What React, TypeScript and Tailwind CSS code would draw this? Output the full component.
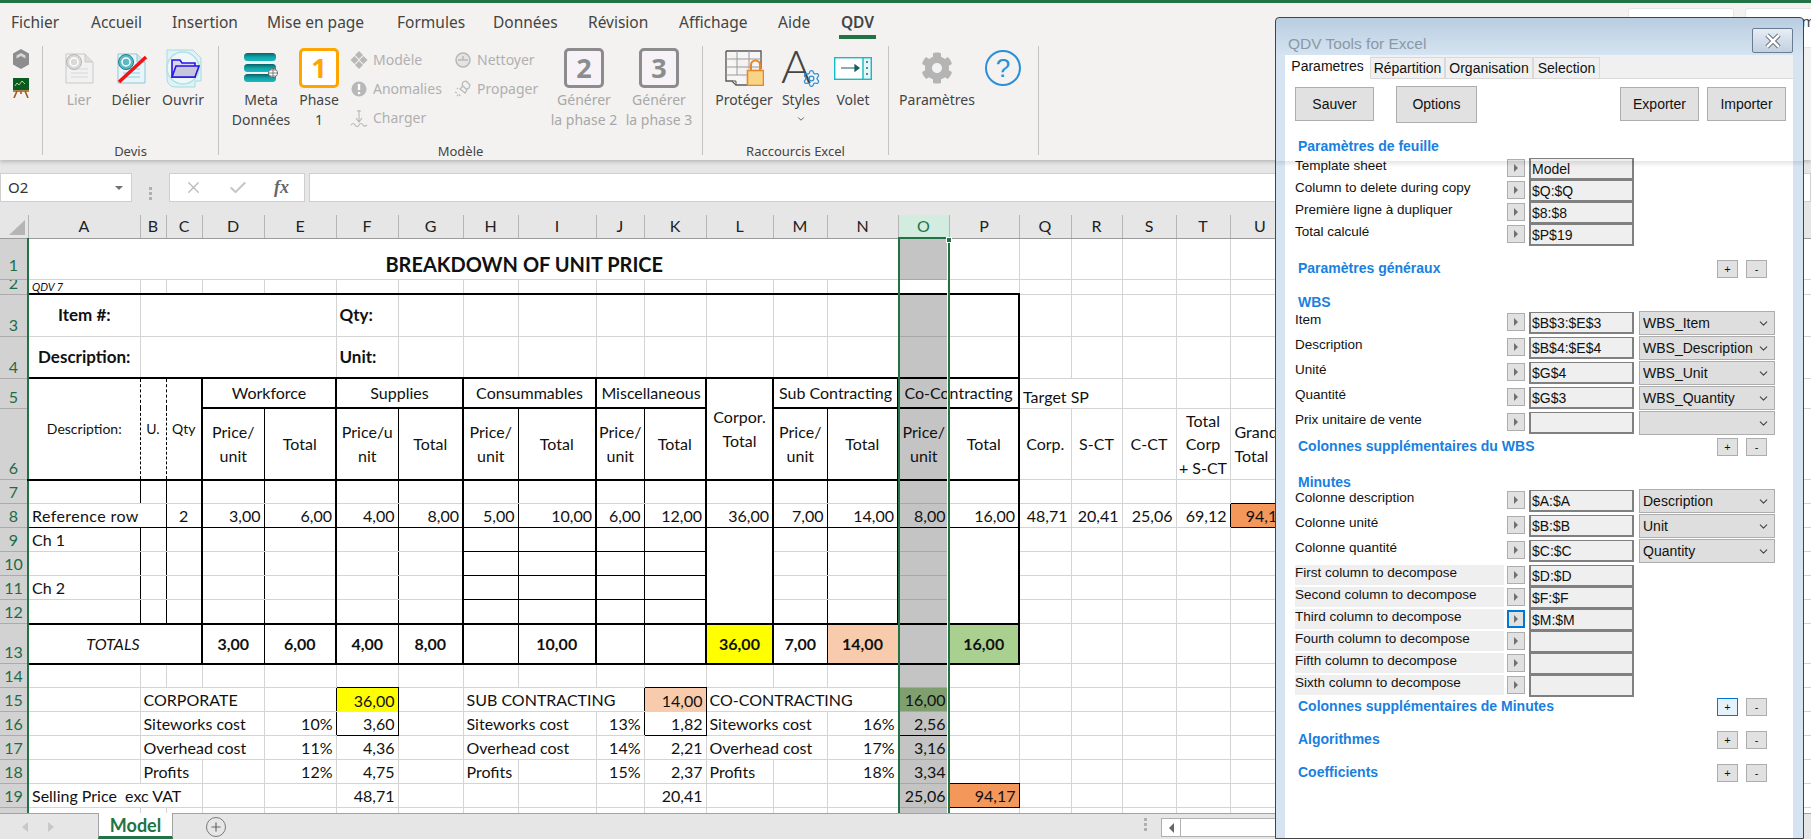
import type { ReactNode } from 'react';
import { Check, ChevronDown, Plus, Settings, X } from 'lucide-react';
import { FaCog } from 'react-icons/fa';

const R_GRAY = 'border-r border-r-[#d4d4d4]';
const R_THIN = 'border-r border-r-black';
const R_THICK = 'border-r-2 border-r-black';
const R_DASH = 'border-r border-r-black [border-right-style:dashed]';
const B_GRAY = 'border-b border-b-[#d4d4d4]';
const B_DARK = 'border-b border-b-[#a8a8a8]';
const B_THIN = 'border-b border-b-black';
const B_THICK = 'border-b-2 border-b-black';
const GREY = 'bg-[#c4c4c4]';

const COL_WIDTHS = [
  'w-[28px]', 'w-[112px]', 'w-[26px]', 'w-[36px]', 'w-[62px]', 'w-[72px]', 'w-[62px]', 'w-[65px]', 'w-[55px]', 'w-[78px]', 'w-[48px]', 'w-[62px]',
  'w-[67px]', 'w-[54px]', 'w-[71px]', 'w-[51px]', 'w-[70px]', 'w-[52px]', 'w-[51px]', 'w-[54px]', 'w-[54px]', 'w-[60px]', 'w-[521px]',
];
const LETTERS = ['A', 'B', 'C', 'D', 'E', 'F', 'G', 'H', 'I', 'J', 'K', 'L', 'M', 'N', 'O', 'P', 'Q', 'R', 'S', 'T', 'U'];

// right border of A..P for the body of the table
const VERTS = [R_THIN, R_THIN, R_THICK, R_THIN, R_THICK, R_THIN, R_THICK, R_THIN, R_THICK, R_THIN, R_THICK, R_THICK, R_THIN, R_THICK, R_GRAY, R_THICK];

const NUM = 'text-right pr-[3px]';
const TXT = 'text-left pl-[3px]';
const MID = 'text-center !align-middle';

function Td({ children, cl = '', span, rows }: { children?: ReactNode; cl?: string; span?: number; rows?: number }) {
  return (
    <td colSpan={span} rowSpan={rows} className={`p-0 overflow-hidden whitespace-pre align-bottom leading-[22px] ${cl}`}>
      {children}
    </td>
  );
}

// empty cells with the normal grid lines
function Blanks({ n, b = B_GRAY }: { n: number; b?: string }) {
  return (
    <>
      {Array.from({ length: n }).map((_, i) => (
        <Td key={i} cl={`${R_GRAY} ${b}`} />
      ))}
    </>
  );
}

function RowHead({ n, short, lift }: { n?: number; short?: boolean; lift?: boolean }) {
  return (
    <td className={`p-0 overflow-hidden bg-[#d2d2d2] text-[#1e6b45] font-normal text-center align-bottom leading-[22px] border-r-2 border-r-[#217346] border-b border-b-[#ababab] ${lift ? 'pb-[3px]' : ''}`}>
      {short ? <div className="h-[14px] overflow-hidden flex items-end justify-center">{n}</div> : n}
    </td>
  );
}

function DocIcon({ muted, cut }: { muted?: boolean; cut?: boolean }) {
  return (
    <svg width="33" height="33" viewBox="0 0 33 33">
      <path d="M3 2h19l8 8v21H3z" fill={muted ? '#f1f1f1' : '#e8f6fb'} stroke={muted ? '#c9c9c9' : '#8fc7d6'} />
      <path d="M22 2v8h8" fill={muted ? '#dddddd' : '#c6e7ef'} stroke={muted ? '#c9c9c9' : '#8fc7d6'} />
      <path d="M8 17h17M8 21h17M8 25h17" stroke={muted ? '#d8d8d8' : '#86cfe2'} />
      <circle cx="11" cy="10" r="7.5" fill={muted ? '#d9d9d9' : '#5fb7c4'} stroke={muted ? '#b5b5b5' : '#1b7f8c'} />
      <circle cx="11" cy="10" r="4" fill="none" stroke="#fff" strokeWidth="1.5" />
      {cut && <path d="M4 30L31 5" stroke="#f01414" strokeWidth="3.5" />}
    </svg>
  );
}

function OpenIcon() {
  return (
    <svg width="38" height="39" viewBox="0 0 38 39">
      <path d="M3 1h26l8 8v23h-6v6H11a8 8 0 0 1-8-8z" fill="#def3f5" stroke="#a7dbe0" />
      <circle cx="19" cy="19" r="16" fill="#eef8f9" stroke="#b5dfe3" strokeWidth="1.5" />
      <path d="M8 11h8l2 3h13v14H8z" fill="#d8d8f4" stroke="#2a12e6" strokeWidth="1.6" />
      <path d="M8 28l4-11h23l-4 11z" fill="#c7c7dc" stroke="#2a12e6" strokeWidth="1.6" />
    </svg>
  );
}

function MetaIcon() {
  return (
    <svg width="34" height="30" viewBox="0 0 34 30">
      <defs>
        <linearGradient id="bar" x1="0" y1="0" x2="0" y2="1">
          <stop offset="0" stopColor="#0b5f66" />
          <stop offset="0.5" stopColor="#10a3a8" />
          <stop offset="1" stopColor="#14bcbe" />
        </linearGradient>
      </defs>
      <rect x="0" y="0" width="32" height="8" rx="3.5" fill="url(#bar)" />
      <rect x="0" y="11" width="32" height="8" rx="3.5" fill="url(#bar)" />
      <rect x="0" y="21" width="32" height="8" rx="3.5" fill="url(#bar)" />
      <circle cx="29" cy="20" r="4.5" fill="#fff" stroke="#555" strokeWidth="0.8" />
      <path d="M24.500 20h9M29 15.500v9M26 17h6M26 23h6" stroke="#555" strokeWidth="0.7" />
    </svg>
  );
}

function ProtectIcon() {
  return (
    <svg width="39" height="36" viewBox="0 0 39 36">
      <path d="M1 1h35v18M1 1v30h6l4 4h12" fill="#f6f6f6" stroke="#5a5a5a" strokeWidth="1.4" />
      <path d="M1 9h35M1 17h35M1 25h22M12 1v24M24 1v18" stroke="#9a9a9a" />
      <path d="M7 31l4 4v-4z" fill="#ddd" stroke="#5a5a5a" />
      <path d="M26 21v-6a4.500 4.500 0 0 1 9 0v6" fill="none" stroke="#e8872a" strokeWidth="2" />
      <rect x="22.500" y="20.500" width="16" height="15" fill="#f7d486" stroke="#e8872a" strokeWidth="1.6" />
    </svg>
  );
}

function VoletIcon() {
  return (
    <svg width="38" height="23" viewBox="0 0 38 23">
      <rect x="0.700" y="0.700" width="36.600" height="21.600" fill="#fff" stroke="#12bcc6" strokeWidth="1.4" />
      <rect x="29" y="0.700" width="8.300" height="21.600" fill="#e3f7f8" stroke="#12bcc6" strokeWidth="1.4" />
      <path d="M7 11h17M21 8l4 3-4 3z" stroke="#1d5b63" strokeWidth="1.2" fill="#1d5b63" />
      <path d="M33 4v2M33 10v2M33 16v2" stroke="#1d5b63" strokeWidth="1.4" />
    </svg>
  );
}

function MiniIcon({ kind }: { kind: string }) {
  const c = '#b8b8b8';
  return (
    <svg width="18" height="18" viewBox="0 0 18 18" className="shrink-0">
      {kind === 'model' && <path d="M9 0l4 4-4 4-4-4zM4.500 5l4 4-4 4-4-4zM13.500 5l4 4-4 4-4-4zM9 10l4 4-4 4-4-4z" fill={c} />}
      {kind === 'warn' && (
        <>
          <circle cx="9" cy="9" r="7.500" fill={c} />
          <path d="M9 4v6" stroke="#fff" strokeWidth="2.400" />
          <circle cx="9" cy="13" r="1.300" fill="#fff" />
        </>
      )}
      {kind === 'load' && <path d="M9 1v11M6 9l3 4 3-4M7 2h4M1 16c2-2 3-2 4 0s3 2 4 0 3-2 4 0 3 1 4 0" fill="none" stroke={c} strokeWidth="1.100" />}
      {kind === 'clean' && (
        <>
          <circle cx="9" cy="9" r="7" fill="#e4e4e4" stroke={c} strokeWidth="1.500" />
          <path d="M4 9h10M9 5v4" stroke={c} strokeWidth="1.500" />
        </>
      )}
      {kind === 'spread' && <path d="M9 2l3-1 4 4-1 3-3 1-4-4zM9 6l4 4-2 3-5-4zM3 8l1 1M1 12l2 1M5 14l1 2M3 16l1-1" fill="none" stroke={c} strokeWidth="1.200" />}
    </svg>
  );
}

function RibbonBtn({ icon, lines, w, muted }: { icon: ReactNode; lines: ReactNode[]; w: string; muted?: boolean }) {
  return (
    <div className={`${w} flex flex-col items-center ${muted ? 'text-[#a8a8a8]' : 'text-[#444]'}`}>
      <div className="h-[44px] flex items-center justify-center">{icon}</div>
      {lines.map((l, i) => (
        <div key={i} className="leading-[20px] whitespace-nowrap">
          {l}
        </div>
      ))}
    </div>
  );
}

function PhaseBox({ n, active }: { n: number; active?: boolean }) {
  return (
    <div
      className={`w-[40px] h-[40px] rounded-[5px] border-[3px] flex items-center justify-center text-[27px] font-bold ${
        active ? 'border-[#ffa500] text-[#ffa500] bg-white' : 'border-[#8c8c8c] text-[#8c8c8c] bg-[#f6f2f8]'
      }`}
    >
      {n}
    </div>
  );
}

function MiniBtn({ kind, label }: { kind: string; label: string }) {
  return (
    <div className="h-[29px] flex items-center gap-[5px] text-[#b0b0b0] whitespace-nowrap">
      <MiniIcon kind={kind} />
      {label}
    </div>
  );
}

function Group({ w, label, children, px = '' }: { w: string; label?: string; children: ReactNode; px?: string }) {
  return (
    <div className={`${w} h-[109px] mt-[4px] border-r border-r-[#c4c4c4] flex flex-col shrink-0`}>
      <div className={`flex-1 flex ${px}`}>{children}</div>
      <div className="h-[20px] -mb-[5px] leading-[22px] text-center text-[13px] text-[#444]">{label}</div>
    </div>
  );
}

function Ribbon() {
  const tabs = [
    ['Fichier', 'w-[80px]'],
    ['Accueil', 'w-[81px]'],
    ['Insertion', 'w-[95px]'],
    ['Mise en page', 'w-[130px]'],
    ['Formules', 'w-[96px]'],
    ['Données', 'w-[95px]'],
    ['Révision', 'w-[91px]'],
    ['Affichage', 'w-[99px]'],
    ['Aide', 'w-[61px]'],
  ];
  return (
    <div className="relative z-10 h-[160px] shrink-0 bg-[#f3f2f1] border-t-[3px] border-t-[#217346] shadow-[0_2px_4px_rgba(0,0,0,0.2)] text-[14px] font-['Noto_Sans',sans-serif] overflow-hidden">
      <div className="h-[39px] pl-[11px] flex text-[15.5px] text-[#444]">
        {tabs.map(([t, w]) => (
          <div key={t} className={`${w} shrink-0 leading-[38px] whitespace-nowrap`}>
            {t}
          </div>
        ))}
        <div className="h-[36px] shrink-0 leading-[38px] font-semibold border-b-[4px] border-b-[#217346] w-[37px] text-center">QDV</div>
        <div className="ml-[752px] mt-[5px] w-[106px] h-[40px] shrink-0 rounded-[3px] bg-white border border-[#e5e5e5] flex gap-[6px] text-[15px] leading-[24px] pl-[18px] text-[#444]">
          <span className="text-[#217346]">↗</span>Partager
        </div>
        <div className="ml-[11px] mt-[5px] w-[120px] h-[40px] rounded-[3px] bg-white border border-[#e5e5e5] flex text-[15px] leading-[24px] pl-[37px] text-[#444] shrink-0">
          Commentaires
        </div>
      </div>
      <div className="flex">
        <Group w="w-[43px]">
          <div className="w-full flex flex-col items-center pt-[3px] gap-[9px]">
            <svg width="18" height="20" viewBox="0 0 18 20">
              <path d="M9 0l8 4.500v11L9 20l-8-4.500v-11z" fill="#8d8d8d" />
              <path d="M9 4l4.500 2.500v3L9 7 4.500 9.500v-3z" fill="#d8d8d8" />
            </svg>
            <svg width="18" height="20" viewBox="0 0 18 20">
              <rect x="1" y="0" width="16" height="12" fill="#0a5c1e" />
              <path d="M3 8l2-3 2 2 3-4 3 3" fill="none" stroke="#d6f0c8" strokeWidth="0.800" />
              <path d="M1 13h16M5 13l-3 7M13 13l3 7M9 13v3" stroke="#a05a16" strokeWidth="1.600" />
            </svg>
          </div>
        </Group>
        <Group w="w-[176px]" label="Devis" px="pl-[10px]">
          <RibbonBtn w="w-[52px]" muted icon={<DocIcon muted />} lines={['Lier']} />
          <RibbonBtn w="w-[52px]" icon={<DocIcon cut />} lines={['Délier']} />
          <RibbonBtn w="w-[52px]" icon={<OpenIcon />} lines={['Ouvrir']} />
        </Group>
        <Group w="w-[484px]" label="Modèle" px="pl-[12px]">
          <RibbonBtn w="w-[60px]" icon={<MetaIcon />} lines={['Meta', 'Données']} />
          <RibbonBtn w="w-[56px]" icon={<PhaseBox n={1} active />} lines={['Phase', '1']} />
          <div className="w-[106px] pl-[3px] -mt-px">
            <MiniBtn kind="model" label="Modèle" />
            <MiniBtn kind="warn" label="Anomalies" />
            <MiniBtn kind="load" label="Charger" />
          </div>
          <div className="w-[93px] pl-[1px] -mt-px">
            <MiniBtn kind="clean" label="Nettoyer" />
            <MiniBtn kind="spread" label="Propager" />
          </div>
          <RibbonBtn w="w-[76px]" muted icon={<PhaseBox n={2} />} lines={['Générer', 'la phase 2']} />
          <RibbonBtn w="w-[74px]" muted icon={<PhaseBox n={3} />} lines={['Générer', 'la phase 3']} />
        </Group>
        <Group w="w-[186px]" label="Raccourcis Excel" px="pl-[9px]">
          <RibbonBtn w="w-[64px]" icon={<ProtectIcon />} lines={['Protéger']} />
          <RibbonBtn
            w="w-[50px]"
            icon={
              <div className="relative w-[40px] h-[40px]">
                <span className="absolute left-0 -top-[10px] text-[46px] leading-[56px] font-light text-[#444] font-['Lato',sans-serif]">A</span>
                <Settings size={19} strokeWidth={1.6} className="absolute right-0 bottom-0 text-[#2b8fd8]" />
              </div>
            }
            lines={['Styles', <ChevronDown key="c" size={10} className="mt-[4px]" />]}
          />
          <RibbonBtn w="w-[54px]" icon={<VoletIcon />} lines={['Volet']} />
        </Group>
        <Group w="w-[150px]" px="pl-[10px]">
          <RibbonBtn w="w-[76px]" icon={<FaCog size={32} className="text-[#b4b4b4]" />} lines={['Paramètres']} />
          <RibbonBtn
            w="w-[56px]"
            icon={
              <div className="w-[36px] h-[36px] rounded-full border-2 border-[#2b8fd8] text-[#2b8fd8] text-[26px] leading-[32px] text-center font-['Liberation_Sans',sans-serif]">
                ?
              </div>
            }
            lines={[]}
          />
        </Group>
      </div>
    </div>
  );
}

function FormulaBar() {
  return (
    <div className="h-[55px] shrink-0 bg-[#e6e6e6] pt-[13px] flex font-['Noto_Sans',sans-serif]">
      <div className="w-[132px] h-[29px] bg-white border border-[#cfcfcf] flex items-center justify-between pl-[7px] pr-[8px] text-[15px] text-[#333]">
        O2
        <span className="w-0 h-0 border-x-[4px] border-x-transparent border-t-[4px] border-t-[#707070]" />
      </div>
      <div className="w-[37px] flex flex-col items-center justify-center gap-[2px] pb-[2px]">
        <span className="w-[3px] h-[3px] bg-[#b0b0b0]" />
        <span className="w-[3px] h-[3px] bg-[#b0b0b0]" />
        <span className="w-[3px] h-[3px] bg-[#b0b0b0]" />
      </div>
      <div className="w-[136px] h-[29px] bg-white border border-[#cfcfcf] flex items-center text-[#b8b8b8] pl-[14px]">
        <X size={19} strokeWidth={1.6} />
        <Check size={20} strokeWidth={2.4} className="ml-[25px] text-[#c4c4c4]" />
        <span className="ml-[26px] text-[#666] text-[18px] italic font-bold font-['Liberation_Serif',serif]">fx</span>
      </div>
      <div className="flex-1 ml-[4px] h-[29px] bg-white border border-[#cfcfcf]" />
    </div>
  );
}

// rows 9 to 12
function MidBody({ text, last, n }: { text?: string; last?: boolean; n: number }) {
  const bottom = last ? B_THICK : B_GRAY;
  return (
    <tr className="h-[24px]">
      <RowHead n={n} />
      <Td cl={`${TXT} ${VERTS[0]} ${bottom}`}>{text}</Td>
      {VERTS.slice(1, 7).map((r, i) => (
        <Td key={i} cl={`${r} ${bottom}`} />
      ))}
      {VERTS.slice(7, 11).map((r, i) => (
        <Td key={i} cl={`${r} ${last ? bottom : B_THIN}`} />
      ))}
      <Td cl={`${R_THICK} ${last ? bottom : ''}`} />
      <Td cl={`${R_THIN} ${bottom}`} />
      <Td cl={`${R_THICK} ${bottom}`} />
      <Td cl={`${GREY} ${R_GRAY} ${last ? bottom : B_DARK}`} />
      <Td cl={`${R_THICK} ${last ? bottom : ''}`} />
      <Blanks n={6} />
    </tr>
  );
}

function CostRow({ n, name, pc1, v1, pc2, v2, pc3, v3, box }: { n: number; name: string; pc1: string; v1: string; pc2: string; v2: string; pc3: string; v3: string; box?: boolean }) {
  const g = `${R_GRAY} ${B_GRAY}`;
  return (
    <tr className="h-[24px]">
      <RowHead n={n} />
      <Td cl={g} />
      <Td span={3} cl={`${TXT} ${g}`}>{name}</Td>
      <Td cl={`${NUM} ${box ? `${R_THIN} ${B_GRAY}` : g}`}>{pc1}</Td>
      <Td cl={`${NUM} ${box ? `${R_THIN} ${B_THIN}` : g}`}>{v1}</Td>
      <Td cl={g} />
      <Td span={2} cl={`${TXT} ${g}`}>{name}</Td>
      <Td cl={`${NUM} ${box ? `${R_THIN} ${B_GRAY}` : g}`}>{pc2}</Td>
      <Td cl={`${NUM} ${box ? `${R_THIN} ${B_THIN}` : g}`}>{v2}</Td>
      <Td span={2} cl={`${TXT} ${g}`}>{name}</Td>
      <Td cl={`${NUM} ${g}`}>{pc3}</Td>
      <Td cl={`${NUM} ${GREY} ${R_GRAY} ${box ? B_THIN : B_DARK}`}>{v3}</Td>
      <Blanks n={7} />
    </tr>
  );
}

function Sheet() {
  const headFive = (t: string, key: string) => (
    <Td key={key} span={2} cl={`${MID} ${R_THICK} ${B_THICK}`}>
      {t}
    </Td>
  );
  const price = (key: string, split = false) => (
    <Td key={key} cl={`${MID} !leading-[24px] ${R_THIN} ${B_THICK}`}>
      {split ? 'Price/u' : 'Price/'}
      <br />
      {split ? 'nit' : 'unit'}
    </Td>
  );
  const total = (key: string) => (
    <Td key={key} cl={`${MID} ${R_THICK} ${B_THICK}`}>
      Total
    </Td>
  );
  const row8 = ['3,00', '6,00', '4,00', '8,00', '5,00', '10,00', '6,00', '12,00', '36,00', '7,00', '14,00'];

  return (
    <div className="relative flex-1 overflow-hidden bg-white text-[16px] text-[#111] font-['Lato',sans-serif]">
      <table className="table-fixed border-collapse w-[1811px]">
        <colgroup>
          {COL_WIDTHS.map((w, i) => (
            <col key={i} className={w} />
          ))}
        </colgroup>
        <thead>
          <tr className="h-[23px]">
            <th className="p-0 bg-[#e6e6e6] border-r border-r-[#b5b5b5] border-b border-b-[#9b9b9b]">
              <svg width="28" height="22" viewBox="0 0 28 22" className="block">
                <path d="M25 5v15H9z" fill="#b5b5b5" />
              </svg>
            </th>
            {LETTERS.map(l => (
              <th key={l} className={`p-0 font-normal leading-[22px] border-r border-r-[#b5b5b5] border-b border-b-[#9b9b9b] ${l === 'O' ? 'bg-[#d2ecdf] text-[#217346]' : 'bg-[#e6e6e6] text-[#222]'}`}>
                {l}
              </th>
            ))}
            <th className="p-0 bg-[#e6e6e6] border-b border-b-[#9b9b9b]" />
          </tr>
        </thead>
        <tbody>
          <tr className="h-[41px]">
            <RowHead n={1} lift />
            <Td span={14} cl={`${R_GRAY} ${B_GRAY} text-center pb-[4px] pl-[122px] text-[20px] font-bold`}>BREAKDOWN OF UNIT PRICE</Td>
            <Td cl={`${GREY} ${R_GRAY} ${B_DARK}`} />
            <Blanks n={7} />
          </tr>
          <tr className="h-[15px]">
            <RowHead n={2} short />
            <Td cl={`${R_GRAY} ${B_THICK} ${TXT} text-[11px] italic !leading-[13px]`}>QDV 7</Td>
            {Array.from({ length: 15 }).map((_, i) => (
              <Td key={i} cl={`${R_GRAY} ${B_THICK}`} />
            ))}
            <Blanks n={6} />
          </tr>
          <tr className="h-[42px]">
            <RowHead n={3} />
            <Td cl={`${R_GRAY} ${B_GRAY} text-center !align-middle text-[17px] font-bold`}>Item #:</Td>
            <Td span={4} cl={`${R_GRAY} ${B_GRAY}`} />
            <Td cl={`${R_GRAY} ${B_GRAY} ${TXT} !align-middle text-[17px] font-bold`}>Qty:</Td>
            <Blanks n={8} />
            <Td cl={`${GREY} ${R_GRAY} ${B_DARK}`} />
            <Td cl={`${R_THICK} ${B_GRAY}`} />
            <Blanks n={6} />
          </tr>
          <tr className="h-[42px]">
            <RowHead n={4} />
            <Td cl={`${R_GRAY} ${B_THICK} text-center !align-middle text-[17px] font-bold`}>Description:</Td>
            <Td span={4} cl={`${R_GRAY} ${B_THICK}`} />
            <Td cl={`${R_GRAY} ${B_THICK} ${TXT} !align-middle text-[17px] font-bold`}>Unit:</Td>
            <Blanks n={8} b={B_THICK} />
            <Td cl={`${GREY} ${R_GRAY} ${B_THICK}`} />
            <Td cl={`${R_THICK} ${B_THICK}`} />
            <Blanks n={6} />
          </tr>
          <tr className="h-[30px]">
            <RowHead n={5} />
            <Td rows={2} cl={`${MID} text-[14px] ${R_DASH} ${B_THICK}`}>Description:</Td>
            <Td rows={2} cl={`${MID} text-[14px] ${R_DASH} ${B_THICK}`}>U.</Td>
            <Td rows={2} cl={`${MID} text-[14px] ${R_THICK} ${B_THICK}`}>Qty</Td>
            {headFive('Workforce', 'w')}
            {headFive('Supplies', 's')}
            {headFive('Consummables', 'c')}
            {headFive('Miscellaneous', 'm')}
            <Td rows={2} cl={`${MID} !leading-[24px] ${R_THICK} ${B_THICK}`}>
              Corpor.
              <br />
              Total
            </Td>
            {headFive('Sub Contracting', 'sc')}
            <Td span={2} cl={`${MID} ${R_THICK} ${B_THICK} bg-[linear-gradient(to_right,#c4c4c4_51px,#ffffff_51px)]`}>Co-Contracting</Td>
            <Td span={2} cl={`${TXT} ${R_GRAY} ${B_GRAY}`}>Target SP</Td>
            <Blanks n={4} />
          </tr>
          <tr className="h-[71px]">
            <RowHead n={6} />
            {price('d')}
            {total('e')}
            {price('f', true)}
            {total('g')}
            {price('h')}
            {total('i')}
            {price('j')}
            {total('k')}
            {price('m')}
            {total('n')}
            <Td cl={`${MID} !leading-[24px] ${GREY} ${R_GRAY} ${B_THICK}`}>
              Price/
              <br />
              unit
            </Td>
            {total('p')}
            <Td cl={`${MID} ${R_GRAY} ${B_GRAY}`}>Corp.</Td>
            <Td cl={`${MID} ${R_GRAY} ${B_GRAY}`}>S-CT</Td>
            <Td cl={`${MID} ${R_GRAY} ${B_GRAY}`}>C-CT</Td>
            <Td cl={`${MID} ${R_GRAY} ${B_GRAY} !leading-[23.5px]`}>
              Total
              <br />
              Corp
              <br />+ S-CT
            </Td>
            <Td cl={`text-left pl-[4px] !align-middle !leading-[24px] ${R_GRAY} ${B_GRAY}`}>
              Grand
              <br />
              Total
            </Td>
            <Blanks n={1} />
          </tr>
          <tr className="h-[24px]">
            <RowHead n={7} />
            {VERTS.map((r, i) => (
              <Td key={i} cl={`${r} ${i === 14 ? `${GREY} ${B_DARK}` : B_GRAY}`} />
            ))}
            <Blanks n={4} />
            <Td cl={`${R_GRAY} ${B_THIN}`} />
            <Blanks n={1} />
          </tr>
          <tr className="h-[24px]">
            <RowHead n={8} />
            <Td span={2} cl={`${TXT} tracking-[0.4px] ${R_THIN} ${B_THIN}`}>Reference row</Td>
            <Td cl={`text-center ${R_THICK} ${B_THIN}`}>2</Td>
            {row8.map((v, i) => (
              <Td key={i} cl={`${NUM} ${VERTS[i + 3]} ${B_THIN}`}>{v}</Td>
            ))}
            <Td cl={`${NUM} ${GREY} ${R_GRAY} ${B_THIN}`}>8,00</Td>
            <Td cl={`${NUM} ${R_THICK} ${B_THIN}`}>16,00</Td>
            <Td cl={`${NUM} ${R_GRAY} ${B_GRAY}`}>48,71</Td>
            <Td cl={`${NUM} ${R_GRAY} ${B_GRAY}`}>20,41</Td>
            <Td cl={`${NUM} ${R_GRAY} ${B_GRAY}`}>25,06</Td>
            <Td cl={`${NUM} ${R_THIN} ${B_GRAY}`}>69,12</Td>
            <Td cl={`${NUM} bg-[#f4975b] ${R_THIN} ${B_THIN}`}>94,17</Td>
            <Blanks n={1} />
          </tr>
          <MidBody n={9} text="Ch 1" />
          <MidBody n={10} />
          <MidBody n={11} text="Ch 2" />
          <MidBody n={12} last />
          <tr className="h-[40px] font-bold">
            <RowHead n={13} />
            <Td span={3} cl={`${MID} italic font-normal pr-[4px] ${R_THICK} ${B_THICK}`}>TOTALS</Td>
            <Td cl={`${MID} ${R_THIN} ${B_THICK}`}>3,00</Td>
            <Td cl={`${MID} ${R_THICK} ${B_THICK}`}>6,00</Td>
            <Td cl={`${MID} ${R_THIN} ${B_THICK}`}>4,00</Td>
            <Td cl={`${MID} ${R_THICK} ${B_THICK}`}>8,00</Td>
            <Td cl={`${R_THIN} ${B_THICK}`} />
            <Td cl={`${MID} ${R_THICK} ${B_THICK}`}>10,00</Td>
            <Td cl={`${R_THIN} ${B_THICK}`} />
            <Td cl={`${R_THICK} ${B_THICK}`} />
            <Td cl={`${MID} bg-[#ffff00] ${R_THICK} ${B_THICK}`}>36,00</Td>
            <Td cl={`${MID} ${R_THIN} ${B_THICK}`}>7,00</Td>
            <Td cl={`${MID} bg-[#f8cbad] ${R_GRAY} ${B_THICK}`}>14,00</Td>
            <Td cl={`${GREY} ${R_GRAY} ${B_THICK}`} />
            <Td cl={`${MID} bg-[#a9d08e] ${R_THICK} ${B_THICK}`}>16,00</Td>
            <Blanks n={6} />
          </tr>
          <tr className="h-[24px]">
            <RowHead n={14} />
            <Blanks n={5} />
            <Td cl={`${R_GRAY} ${B_THIN}`} />
            <Blanks n={4} />
            <Td cl={`${R_GRAY} ${B_THIN}`} />
            <Blanks n={3} />
            <Td cl={`${GREY} ${R_GRAY} ${B_DARK}`} />
            <Blanks n={7} />
          </tr>
          <tr className="h-[24px]">
            <RowHead n={15} />
            <Td cl={`${R_GRAY} ${B_GRAY}`} />
            <Td span={3} cl={`${TXT} ${R_GRAY} ${B_GRAY}`}>CORPORATE</Td>
            <Td cl={`${R_THIN} ${B_GRAY}`} />
            <Td cl={`${NUM} bg-[#ffff00] ${R_THIN}`}>36,00</Td>
            <Td cl={`${R_GRAY} ${B_GRAY}`} />
            <Td span={3} cl={`${TXT} ${R_THIN} ${B_GRAY}`}>SUB CONTRACTING</Td>
            <Td cl={`${NUM} bg-[#f8cbad] ${R_THIN}`}>14,00</Td>
            <Td span={3} cl={`${TXT} ${R_GRAY} ${B_GRAY}`}>CO-CONTRACTING</Td>
            <Td cl={`${NUM} bg-[#7f9f6f] ${R_GRAY} ${B_DARK}`}>16,00</Td>
            <Blanks n={7} />
          </tr>
          <CostRow n={16} name="Siteworks cost" pc1="10%" v1="3,60" pc2="13%" v2="1,82" pc3="16%" v3="2,56" box />
          <CostRow n={17} name="Overhead cost" pc1="11%" v1="4,36" pc2="14%" v2="2,21" pc3="17%" v3="3,16" />
          <tr className="h-[24px]">
            <RowHead n={18} />
            <Td cl={`${R_GRAY} ${B_GRAY}`} />
            <Td span={2} cl={`${TXT} ${R_GRAY} ${B_GRAY}`}>Profits</Td>
            <Td cl={`${R_GRAY} ${B_GRAY}`} />
            <Td cl={`${NUM} ${R_GRAY} ${B_GRAY}`}>12%</Td>
            <Td cl={`${NUM} ${R_GRAY} ${B_GRAY}`}>4,75</Td>
            <Td cl={`${R_GRAY} ${B_GRAY}`} />
            <Td cl={`${TXT} ${R_GRAY} ${B_GRAY}`}>Profits</Td>
            <Td cl={`${R_GRAY} ${B_GRAY}`} />
            <Td cl={`${NUM} ${R_GRAY} ${B_GRAY}`}>15%</Td>
            <Td cl={`${NUM} ${R_GRAY} ${B_GRAY}`}>2,37</Td>
            <Td cl={`${TXT} ${R_GRAY} ${B_GRAY}`}>Profits</Td>
            <Td cl={`${R_GRAY} ${B_GRAY}`} />
            <Td cl={`${NUM} ${R_GRAY} ${B_GRAY}`}>18%</Td>
            <Td cl={`${NUM} ${GREY} ${R_GRAY} ${B_DARK}`}>3,34</Td>
            <Td cl={`${R_GRAY} ${B_THIN}`} />
            <Blanks n={6} />
          </tr>
          <tr className="h-[24px]">
            <RowHead n={19} />
            <Td span={3} cl={`${TXT} ${R_GRAY} ${B_GRAY}`}>{'Selling Price  exc VAT'}</Td>
            <Blanks n={2} />
            <Td cl={`${NUM} ${R_GRAY} ${B_GRAY}`}>48,71</Td>
            <Blanks n={4} />
            <Td cl={`${NUM} ${R_GRAY} ${B_GRAY}`}>20,41</Td>
            <Blanks n={3} />
            <Td cl={`${NUM} ${GREY} ${R_THIN} ${B_DARK}`}>25,06</Td>
            <Td cl={`${NUM} bg-[#f4975b] ${R_THIN} ${B_THIN}`}>94,17</Td>
            <Blanks n={6} />
          </tr>
          <tr className="h-[24px]">
            <RowHead />
            <Blanks n={14} />
            <Td cl={GREY} />
            <Blanks n={7} />
          </tr>
        </tbody>
      </table>
      {/* selected column O */}
      <div className="absolute left-[898px] top-[22px] w-[52px] bottom-0 border-2 border-[#217346] border-b-0 shadow-[inset_-1px_0_0_#ffffff] pointer-events-none" />
      <div className="absolute left-[946px] top-[22px] w-[6px] h-[6px] bg-[#217346] border border-white" />
    </div>
  );
}

function TabBar() {
  return (
    <div className="h-[26px] shrink-0 bg-[#e6e6e6] border-t border-t-[#a3a3a3] flex items-start relative z-10 font-['Lato',sans-serif]">
      <div className="w-[98px] h-full flex items-center pl-[22px] gap-[20px]">
        <span className="w-0 h-0 border-y-[5px] border-y-transparent border-r-[6px] border-r-[#c8c8c8]" />
        <span className="w-0 h-0 border-y-[5px] border-y-transparent border-l-[6px] border-l-[#c8c8c8]" />
      </div>
      <div className="w-[75px] h-[26px] -mt-px bg-white border-x border-x-[#a3a3a3] border-b-[3px] border-b-[#217346] text-[#217346] font-bold text-[18px] leading-[25px] text-center">Model</div>
      <div className="ml-[33px] mt-[3px] w-[20px] h-[20px] rounded-full border border-[#7a7a7a] flex items-center justify-center text-[#666]">
        <Plus size={14} />
      </div>
      <div className="ml-[918px] mt-[4px] w-[3px] h-[3px] bg-[#b0b0b0] shadow-[0_5px_0_#b0b0b0,0_10px_0_#b0b0b0]" />
      <div className="ml-[14px] mt-[4px] h-[19px] w-[300px] bg-white border border-[#b0b0b0] flex">
        <div className="w-[19px] border-r border-r-[#b0b0b0] flex items-center justify-center">
          <span className="w-0 h-0 border-y-[5px] border-y-transparent border-r-[5px] border-r-[#666]" />
        </div>
      </div>
    </div>
  );
}

function ArrowBtn({ focus }: { focus?: boolean }) {
  return (
    <div className={`mt-px w-[18px] h-[18px] flex items-center justify-center shrink-0 ${focus ? 'border-2 border-[#0078d7] bg-[#e1e1e1]' : 'border border-[#adadad] bg-[#e1e1e1]'}`}>
      <span className="w-0 h-0 border-y-[4px] border-y-transparent border-l-[4px] border-l-[#707070]" />
    </div>
  );
}

function RefRow({ label, value = '', option, shaded, focus, tall }: { label: string; value?: string; option?: string; shaded?: boolean; focus?: boolean; tall?: boolean }) {
  return (
    <div className={`${tall ? 'h-[25px]' : 'h-[22px]'} flex items-start`}>
      <div className={`w-[209px] shrink-0 leading-[16px] whitespace-nowrap ${shaded ? 'h-[20px] bg-[#efefef]' : ''}`}>{label}</div>
      <div className="ml-[3px]">
        <ArrowBtn focus={focus} />
      </div>
      <div className="ml-[4px] w-[105px] shrink-0 h-[22px] bg-[#efefef] border-2 border-[#808080] border-t-[1px] leading-[20px] pl-[1px] text-[14px] whitespace-nowrap">{value}</div>
      {tall && (
        <div className="ml-[5px] w-[136px] h-[24px] -mt-px bg-[#dedede] border-[1.500px] border-[#adadad] flex items-center justify-between pl-[3px] pr-[4px] text-[14px]">
          <span className="whitespace-nowrap">{option}</span>
          <ChevronDown size={13} className="text-[#444] shrink-0" />
        </div>
      )}
    </div>
  );
}

function Section({ title, focus, mt }: { title: string; focus?: boolean; mt: string }) {
  const btn = 'w-[21px] h-[18px] border border-[#adadad] bg-[#e1e1e1] text-[11px] leading-[16px] text-center';
  return (
    <div className={`${mt} h-[18px] flex items-start`}>
      <div className="w-[422px] pl-[3px] text-[14px] font-bold text-[#1a7fe0] leading-[16px] whitespace-nowrap">{title}</div>
      <div className={focus ? 'w-[21px] h-[18px] border border-[#0078d7] bg-[#e5f1fb] text-[11px] leading-[16px] text-center' : btn}>+</div>
      <div className={`ml-[8px] ${btn}`}>-</div>
    </div>
  );
}

function PushBtn({ w, h, mt, ml, children }: { w: string; h: string; mt: string; ml: string; children: ReactNode }) {
  return <div className={`${w} ${h} ${mt} ${ml} bg-[#e1e1e1] border border-[#adadad] flex items-center justify-center shrink-0`}>{children}</div>;
}

function ToolPanel() {
  return (
    <div className="absolute z-20 left-[1275px] top-[17px] bottom-0 w-[529px] rounded-t-[4px] border border-[#444] bg-[linear-gradient(to_bottom,#b9cde0_0px,#d6e4f2_38px)] pl-[9px] pr-[10px] flex flex-col text-[13.500px] text-[#111] font-['Liberation_Sans',sans-serif]">
      <div className="h-[37px] shrink-0 flex items-start justify-between">
        <div className="mt-[14px] ml-[3px] text-[15.500px] text-[#8b98a5]">QDV Tools for Excel</div>
        <div className="mt-[10px] w-[41px] h-[25px] border border-[#6b7c92] rounded-[2px] bg-[linear-gradient(to_bottom,#e6edf5,#c2d0df)] flex items-center justify-center">
          <svg width="18" height="16" viewBox="0 0 18 16">
            <path d="M3 2l12 12M15 2L3 14" stroke="#5b6470" strokeWidth="4.500" />
            <path d="M3 2l12 12M15 2L3 14" stroke="#ffffff" strokeWidth="2.500" />
          </svg>
        </div>
      </div>
      <div className="h-[24px] shrink-0 bg-[#f0f0f0] flex text-[14px]">
        <div className="w-[85px] h-[24px] bg-white pt-[1px] text-center relative z-10">Parametres</div>
        {[
          ['Répartition', 'w-[75px]'],
          ['Organisation', 'w-[88px]'],
          ['Selection', 'w-[67px]'],
        ].map(([t, w]) => (
          <div key={t} className={`${w} mt-[2px] h-[22px] border-l border-r border-t border-[#d9d9d9] text-center leading-[20px]`}>
            {t}
          </div>
        ))}
      </div>
      <div className="flex-1 bg-white border-t border-[#d9d9d9] pl-[10px] pr-[6px] -mt-px">
        <div className="flex text-[14px] items-start h-[44px]">
          <PushBtn w="w-[79px]" h="h-[34px]" mt="mt-[8px]" ml="ml-0">Sauver</PushBtn>
          <PushBtn w="w-[81px]" h="h-[37px]" mt="mt-[7px]" ml="ml-[22px]">Options</PushBtn>
          <PushBtn w="w-[79px]" h="h-[34px]" mt="mt-[8px]" ml="ml-[143px]">Exporter</PushBtn>
          <PushBtn w="w-[79px]" h="h-[34px]" mt="mt-[8px]" ml="ml-[8px]">Importer</PushBtn>
        </div>
        <div className="mt-[13px] h-[20px] pl-[3px] text-[14px] font-bold text-[#1a7fe0] leading-[20px]">Paramètres de feuille</div>
        <div className="mt-[2px]">
          <RefRow label="Template sheet" value="Model" />
          <RefRow label="Column to delete during copy" value="$Q:$Q" />
          <RefRow label="Première ligne à dupliquer" value="$8:$8" />
          <RefRow label="Total calculé" value="$P$19" />
        </div>
        <Section title="Paramètres généraux" mt="mt-[14px]" />
        <div className="mt-[14px] h-[20px] pl-[3px] text-[14px] font-bold text-[#1a7fe0] leading-[20px]">WBS</div>
        <div>
          <RefRow tall label="Item" value="$B$3:$E$3" option="WBS_Item" />
          <RefRow tall label="Description" value="$B$4:$E$4" option="WBS_Description" />
          <RefRow tall label="Unité" value="$G$4" option="WBS_Unit" />
          <RefRow tall label="Quantité" value="$G$3" option="WBS_Quantity" />
          <RefRow tall label="Prix unitaire de vente" />
        </div>
        <Section title="Colonnes supplémentaires du WBS" mt="mt-px" />
        <div className="mt-[18px] h-[16px] pl-[3px] text-[14px] font-bold text-[#1a7fe0] leading-[16px]">Minutes</div>
        <div>
          <RefRow tall label="Colonne description" value="$A:$A" option="Description" />
          <RefRow tall label="Colonne unité" value="$B:$B" option="Unit" />
          <RefRow tall label="Colonne quantité" value="$C:$C" option="Quantity" />
        </div>
        <div>
          <RefRow shaded label="First column to decompose" value="$D:$D" />
          <RefRow shaded label="Second column to decompose" value="$F:$F" />
          <RefRow shaded focus label="Third column to decompose" value="$M:$M" />
          <RefRow shaded label="Fourth column to decompose" />
          <RefRow shaded label="Fifth column to decompose" />
          <RefRow shaded label="Sixth column to decompose" />
        </div>
        <Section title="Colonnes supplémentaires de Minutes" focus mt="mt-px" />
        <Section title="Algorithmes" mt="mt-[15px]" />
        <Section title="Coefficients" mt="mt-[15px]" />
      </div>
      <div className="absolute left-0 right-0 top-[143px] h-[6px] bg-linear-to-b from-black/10 to-transparent pointer-events-none" />
    </div>
  );
}

export default function App() {
  return (
    <div className="relative w-[1811px] h-[839px] overflow-hidden flex flex-col bg-white">
      <Ribbon />
      <FormulaBar />
      <Sheet />
      <TabBar />
      <ToolPanel />
    </div>
  );
}
